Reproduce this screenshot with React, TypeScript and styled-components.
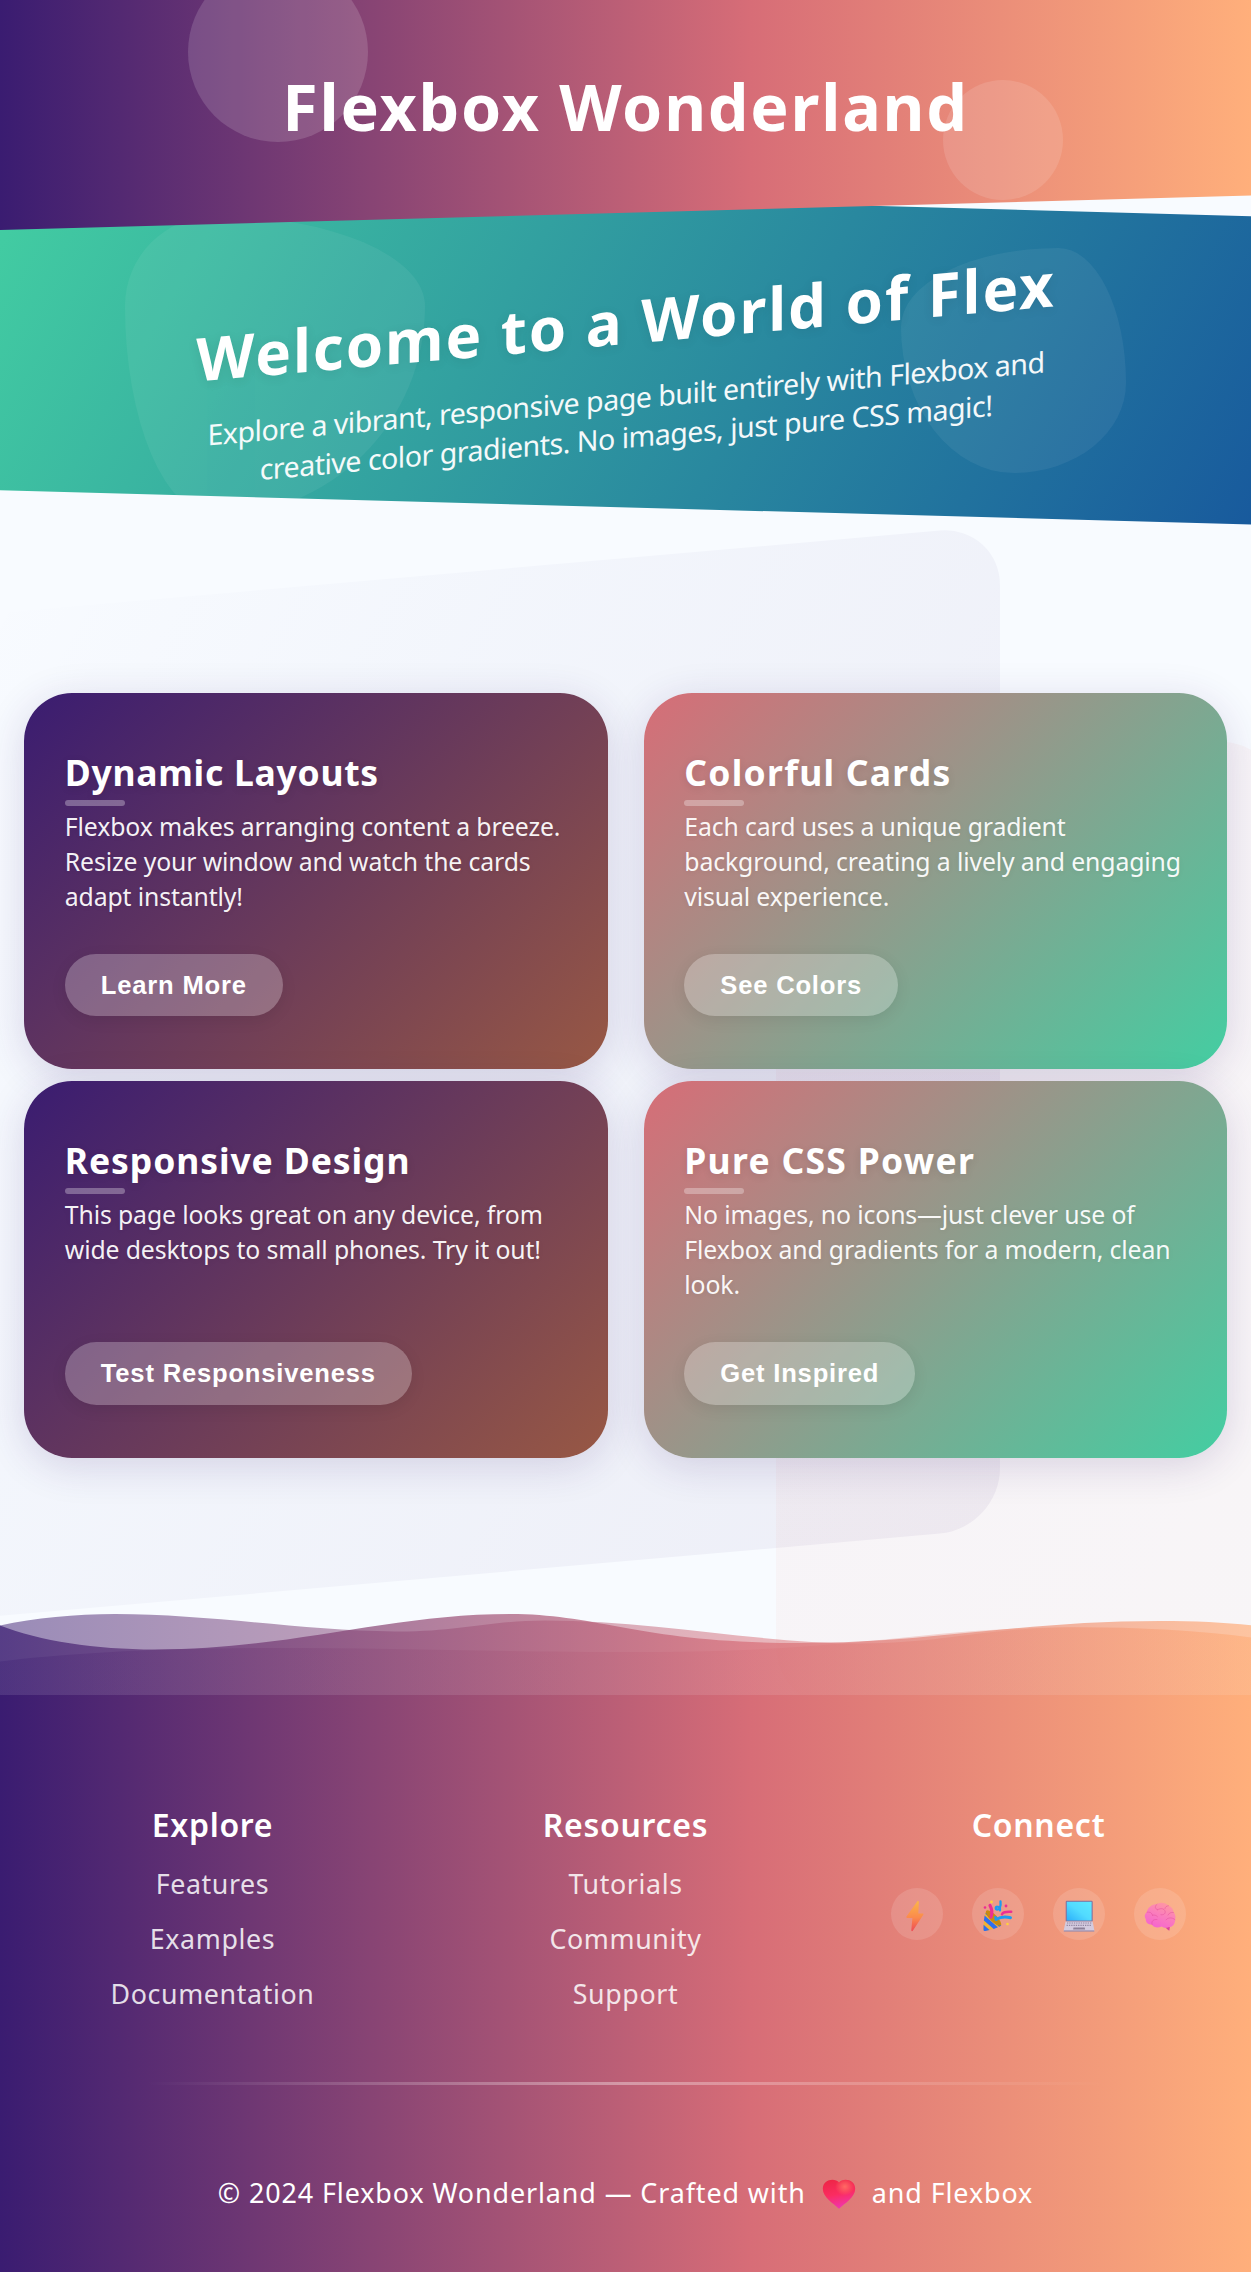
import React from "react";
import styled, { createGlobalStyle } from "styled-components";

const GlobalStyle = createGlobalStyle`
  * { box-sizing: border-box; }
  html, body { margin: 0; padding: 0; }
  body {
    background: #f8fbff;
    color: #fff;
    font-family: "Noto Sans", "Open Sans", "Liberation Sans", sans-serif;
  }
  h1, h2, h3, p, ul { margin: 0; padding: 0; }
`;

const Page = styled.div`
  display: flex;
  flex-direction: column;
  overflow: hidden;
`;

const Header = styled.header`
  position: relative;
  z-index: 2;
  display: flex;
  justify-content: center;
  height: 230px;
  padding-top: 63px;
  background: linear-gradient(90deg, #3a1c71 0%, #d76d77 60%, #ffaf7b 100%);
  clip-path: polygon(0 0, 100% 0, 100% 85%, 0 100%);
`;

const Bubble = styled.span<{ $size: number; $alpha: number; $side: "left" | "right"; $top: number }>`
  position: absolute;
  ${(p) => p.$side}: 15%;
  top: ${(p) => p.$top}px;
  width: ${(p) => p.$size}px;
  height: ${(p) => p.$size}px;
  border-radius: 50%;
  background: rgba(255, 255, 255, ${(p) => p.$alpha});
`;

const SiteTitle = styled.h1`
  position: relative;
  font-size: 64.5px;
  line-height: 87px;
  font-weight: 700;
  letter-spacing: 1.75px;
`;

const Hero = styled.section`
  position: relative;
  z-index: 1;
  display: flex;
  flex-direction: column;
  align-items: center;
  height: 342.5px;
  margin-top: -48px;
  padding-top: 98.5px;
  background: linear-gradient(120deg, #43cea2 0%, #185a9d 100%);
  clip-path: polygon(0 0, 100% 10%, 100% 100%, 0 90%);
`;

const BlobLeft = styled.span`
  position: absolute;
  left: 10%;
  top: 10%;
  width: 300px;
  height: 300px;
  border-radius: 30% 70% 70% 30% / 30% 30% 70% 70%;
  background: rgba(255, 255, 255, 0.06);
`;

const BlobRight = styled.span`
  position: absolute;
  right: 10%;
  bottom: 15%;
  width: 225px;
  height: 225px;
  border-radius: 70% 30% 50% 50% / 35% 60% 40% 65%;
  background: rgba(255, 255, 255, 0.06);
`;

const HeroContent = styled.div`
  position: relative;
  display: flex;
  flex-direction: column;
  align-items: center;
  gap: 16.5px;
  transform: skewY(-5deg);
  text-align: center;
`;

const HeroTitle = styled.h2`
  font-size: 60px;
  line-height: 80px;
  font-weight: 700;
  letter-spacing: 1.95px;
  text-shadow: 0 2px 12px rgba(0, 0, 0, 0.08);
`;

const HeroText = styled.p`
  max-width: 870px;
  font-size: 28.6px;
  line-height: 39px;
  letter-spacing: -0.52px;
  opacity: 0.95;
`;

const Main = styled.main`
  position: relative;
  padding: 168.5px 24px 237.3px;
`;

const Backdrop = styled.span<{ $left: number; $top: number; $width: number; $skew: number; $fill: string }>`
  position: absolute;
  left: ${(p) => p.$left}px;
  top: ${(p) => p.$top}px;
  width: ${(p) => p.$width}px;
  height: 1003px;
  border-radius: 60px;
  transform: skewY(${(p) => p.$skew}deg);
  background: ${(p) => p.$fill};
`;

const CardGrid = styled.div`
  position: relative;
  display: grid;
  grid-template-columns: 1fr 1fr;
  grid-auto-rows: 376.4px;
  gap: 11.9px 36px;
`;

const CardBox = styled.article<{ $from: string; $to: string }>`
  display: flex;
  flex-direction: column;
  align-items: flex-start;
  padding: 54.5px 40.8px 53px;
  border-radius: 48px;
  background: linear-gradient(135deg, ${(p) => p.$from} 0%, ${(p) => p.$to} 100%);
  box-shadow: 0 8px 40px rgba(58, 28, 113, 0.16);
`;

const CardTitle = styled.h3<{ $tracking: number }>`
  font-size: 35.5px;
  line-height: 48px;
  font-weight: 700;
  letter-spacing: ${(p) => p.$tracking}px;
  text-shadow: 0 2px 8px rgba(0, 0, 0, 0.1);
`;

const Underline = styled.span`
  width: 60px;
  height: 6px;
  margin: 4.5px 0 3px;
  border-radius: 3px;
  background: rgba(255, 255, 255, 0.3);
`;

const CardText = styled.p`
  font-size: 24.8px;
  line-height: 35px;
  letter-spacing: -0.13px;
  color: rgba(255, 255, 255, 0.94);
  text-shadow: 0 1px 6px rgba(0, 0, 0, 0.06);
`;

const CardButton = styled.button`
  height: 62.4px;
  margin-top: auto;
  padding: 0 36px;
  border: 0;
  border-radius: 32px;
  background: rgba(255, 255, 255, 0.25);
  box-shadow: 0 4px 16px rgba(0, 0, 0, 0.08);
  color: #fff;
  font-family: "Liberation Sans", Arial, sans-serif;
  font-size: 25.6px;
  font-weight: 700;
  letter-spacing: 0.8px;
`;

const Footer = styled.footer`
  position: relative;
  display: flex;
  flex-direction: column;
  align-items: center;
  height: 577px;
  padding: 108.5px 24px 0;
  background: linear-gradient(90deg, #3a1c71 0%, #d76d77 60%, #ffaf7b 100%);
`;

const WaveArt = styled.svg`
  position: absolute;
  left: 0;
  bottom: 100%;
  width: 100%;
  height: 85px;
`;

const FooterColumns = styled.div`
  display: grid;
  grid-template-columns: repeat(3, 1fr);
  gap: 36px;
  width: 100%;
`;

const FooterColumn = styled.div`
  display: flex;
  flex-direction: column;
  align-items: center;
`;

const FooterTitle = styled.h3`
  font-size: 32px;
  line-height: 44px;
  font-weight: 600;
  letter-spacing: 0.7px;
`;

const LinkList = styled.ul`
  display: flex;
  flex-direction: column;
  align-items: center;
  gap: 18px;
  margin-top: 17.5px;
  list-style: none;
`;

const FooterLink = styled.a`
  display: block;
  color: rgba(255, 255, 255, 0.85);
  font-size: 26.8px;
  line-height: 37px;
  letter-spacing: 0.6px;
`;

const IconRow = styled.div`
  display: flex;
  gap: 29.3px;
  margin-top: 40.5px;
`;

const IconCircle = styled.span`
  display: flex;
  align-items: center;
  justify-content: center;
  width: 52px;
  height: 52px;
  padding-top: 4px;
  border-radius: 50%;
  background: rgba(255, 255, 255, 0.13);
`;

const Divider = styled.span`
  width: 960px;
  height: 3px;
  margin-top: 70px;
  background: linear-gradient(90deg, rgba(255, 255, 255, 0), rgba(255, 255, 255, 0.36), rgba(255, 255, 255, 0));
`;

const Copyright = styled.p`
  display: flex;
  align-items: center;
  margin-top: 89px;
  font-size: 26.9px;
  line-height: 37px;
  letter-spacing: 0.9px;
  white-space: nowrap;
`;

const HeartIcon = styled.svg`
  width: 34px;
  height: 32px;
  margin: 4px 16px 0;
`;

function Waves() {
  return (
    <WaveArt viewBox="0 0 1251 85" preserveAspectRatio="none">
      <defs>
        <linearGradient id="wave" gradientUnits="userSpaceOnUse" x1="0" y1="0" x2="1251" y2="0">
          <stop offset="0" stopColor="#3a1c71" />
          <stop offset="0.6" stopColor="#d76d77" />
          <stop offset="1" stopColor="#ffaf7b" />
        </linearGradient>
      </defs>
      <path
        fill="url(#wave)"
        opacity="0.5"
        d="M0,15.5C35,8 75,4 115,4C210,4 300,20.5 395,21.5C460,22 490,10.5 545,10.5C655,10.5 760,33.5 860,33.5C945,33.5 985,17.3 1075,17.3C1140,17.3 1200,20.5 1251,27.5V85H0Z"
      />
      <path
        fill="url(#wave)"
        opacity="0.7"
        d="M0,15.5C40,31 95,39.5 155,39.5C290,39.5 390,4 510,4C600,4 640,33 800,33C930,33 1020,11 1160,11C1195,11 1225,12.5 1251,15.3V85H0Z"
      />
      <path
        fill="url(#wave)"
        opacity="0.3"
        d="M0,51.5C60,44 150,38 270,38C400,38 500,42 640,42C860,42 920,17.3 1075,17.3C1140,17.3 1200,20.5 1251,27.5V85H0Z"
      />
    </WaveArt>
  );
}

function Bolt() {
  return (
    <svg width="32" height="32" viewBox="0 0 32 32" aria-label="Lightning">
      <defs>
        <linearGradient id="bolt" x1="0.5" y1="0" x2="0.5" y2="1">
          <stop offset="0" stopColor="#fbb548" />
          <stop offset="0.55" stopColor="#fb8a4c" />
          <stop offset="1" stopColor="#ee4a55" />
        </linearGradient>
      </defs>
      <path
        d="M16.2 1.4 5.5 16.6c-.4.7 0 1.3.7 1.3h5.2L10.3 30.3c0 .9 1 1.2 1.5.5l10.5-16c.4-.6.1-1.3-.7-1.3h-4.3l.6-11.600c0-.9-1.100-1.200-1.700-.5Z"
        fill="url(#bolt)"
      />
    </svg>
  );
}

function Party() {
  return (
    <svg width="32" height="32" viewBox="0 0 32 32" aria-label="Party popper">
      <path d="M3.200 12.500c-.9 5-1.700 11-1.800 16.400 0 1.600.6 2.300 2.200 2.100 5-.7 10.800-3 15.800-5.400C20.500 22 8 8.500 3.200 12.500Z" fill="#f2b134" />
      <path d="m2.600 15.500 13.300 11.700-4.200 1.700L1.900 20.400Zm-1 9.300 5.900 5.300-4 .9c-1.300.1-2-.4-2-1.500ZM7 12l11.600 11.500.5 2.300-2 .9L3.200 13.500Z" fill="#2d6ff0" />
      <ellipse cx="11.5" cy="18" rx="3.5" ry="10.3" transform="rotate(-45 11.5 18)" fill="#c98a10" />
      <path d="M9 17c1.500-4 1.200-7.500-1-11.500" fill="none" stroke="#ec2f93" strokeWidth="3.2" strokeLinecap="round" />
      <path d="M14 19.500c4.500-2.800 9-3.200 14.500-1.800" fill="none" stroke="#1e9bf0" strokeWidth="3" strokeLinecap="round" />
      <path d="M18.500 1.500c.5 5-.8 8-3.200 8-2 0-2.100-3 0-2.900 2 0 3 1.700 2.700 3.700" fill="none" stroke="#1e9bf0" strokeWidth="2.3" strokeLinecap="round" />
      <path d="M20 14.300c1-2.800 4.500-2.400 9.200-2.600" fill="none" stroke="#ec2f93" strokeWidth="2.5" strokeLinecap="round" />
      <circle cx="13.5" cy="17.5" r="1.4" fill="#1e9bf0" />
      <circle cx="9.5" cy="2" r="1.4" fill="#ffd23c" />
      <circle cx="25.5" cy="24" r="1.3" fill="#ffd23c" />
      <circle cx="3" cy="7.5" r="1.3" fill="#ec2f93" />
      <circle cx="24" cy="6" r="1.4" fill="#ec2f93" />
    </svg>
  );
}

function Laptop() {
  return (
    <svg width="32" height="32" viewBox="0 0 32 32" aria-label="Laptop">
      <defs>
        <linearGradient id="screen" x1="0" y1="1" x2="1" y2="0">
          <stop offset="0" stopColor="#2bb0fb" />
          <stop offset="0.5" stopColor="#52dbff" />
          <stop offset="1" stopColor="#5ce9ff" />
        </linearGradient>
      </defs>
      <rect x="2.7" y="0.7" width="27" height="21" rx="1.2" fill="#84719c" />
      <rect x="3.8" y="1.8" width="24.800" height="18.700" fill="url(#screen)" />
      <path d="M2.600 21.500h27l1.700 8.500v1.300H.8V30Z" fill="#d4cbdf" />
      <path d="M.8 30.500h30.500v1H.8Z" fill="#8d7d9e" />
      <path d="M4 23h24.300M3.600 25.300h25" stroke="#9286a2" strokeWidth="1.2" strokeDasharray="1.3 1" />
      <path d="M10.500 27.600h11.200l.4 1.900h-12Z" fill="#8d8199" />
    </svg>
  );
}

function Brain() {
  return (
    <svg width="32" height="32" viewBox="0 0 32 32" aria-label="Brain">
      <defs>
        <linearGradient id="brain" x1="0.8" y1="0" x2="0.3" y2="1">
          <stop offset="0" stopColor="#ff9a9e" />
          <stop offset="0.45" stopColor="#fb80ba" />
          <stop offset="1" stopColor="#f564d0" />
        </linearGradient>
      </defs>
      <path d="M20 25.500c1.500 2 3.300 4.300 5.300 5.300l.8-5.300Z" fill="#dc3f9b" />
      <path
        d="M13 4C17 1.700 22 3 24.500 5.700c3.500 1 5 3.900 5 6.600 2 2 2.400 5 1.500 7.500.2 4.500-2.500 7.500-6.500 7.400-2.500 1-5 .7-6.800-.7-4 1.700-8 1-10-2-3.700 0-6-2.300-5.900-5.300-1.900-2.700-1.100-5.500 1-7C3.300 8 7.500 4.300 13 4Z"
        fill="url(#brain)"
      />
      <path
        d="M13 4.200c-2.500 2-2.300 4.700.6 5.600M3 12.200c3-.5 5 .5 5.500 3M8 24.500c-.8-3.500 1.500-5.500 5-5M13.500 9.800c3.500-2 6.500-1.300 7.500 1.200 1 2.400-1.500 4.300-4 3.700M24.500 5.700c-2 .2-3.400 1.200-3.600 3M29.500 12.500c-2.500-.5-4.500.5-5.500 2.500M31 19.600c-3-2.400-7-2.400-9 .3M8.500 15.200c2-.6 3.500 0 5 1.500"
        fill="none"
        stroke="#de4797"
        strokeOpacity="0.42"
        strokeWidth="1"
        strokeLinecap="round"
      />
    </svg>
  );
}

function Heart() {
  return (
    <HeartIcon viewBox="0 0 34 32" aria-label="Heart">
      <defs>
        <linearGradient id="heart" x1="0.3" y1="0" x2="0.55" y2="1">
          <stop offset="0" stopColor="#ee2647" />
          <stop offset="0.5" stopColor="#fb2c60" />
          <stop offset="1" stopColor="#ef36b4" />
        </linearGradient>
        <radialGradient id="heartShine" cx="0.68" cy="0.24" r="0.3">
          <stop offset="0" stopColor="#ff6a63" />
          <stop offset="1" stopColor="#ff6a63" stopOpacity="0" />
        </radialGradient>
      </defs>
      <path d="M17 4.500C13.500-.3 .8 .6 .8 10.800 .8 19.500 11.500 25.500 17 30.800 22.500 25.500 33.200 19.500 33.200 10.800 33.200 .6 20.500-.3 17 4.500Z" fill="url(#heart)" />
      <path d="M17 4.500C13.500-.3 .8 .6 .8 10.800 .8 19.500 11.500 25.500 17 30.800 22.500 25.500 33.200 19.500 33.200 10.800 33.200 .6 20.500-.3 17 4.500Z" fill="url(#heartShine)" />
    </HeartIcon>
  );
}

const purple = { from: "#3a1c71", to: "#985844" };
const green = { from: "#d76d77", to: "#43cea2" };

const cards = [
  {
    title: "Dynamic Layouts",
    tracking: 0.72,
    text: "Flexbox makes arranging content a breeze. Resize your window and watch the cards adapt instantly!",
    action: "Learn More",
    tone: purple,
  },
  {
    title: "Colorful Cards",
    tracking: 1.25,
    text: "Each card uses a unique gradient background, creating a lively and engaging visual experience.",
    action: "See Colors",
    tone: green,
  },
  {
    title: "Responsive Design",
    tracking: 0.9,
    text: "This page looks great on any device, from wide desktops to small phones. Try it out!",
    action: "Test Responsiveness",
    tone: purple,
  },
  {
    title: "Pure CSS Power",
    tracking: 1.28,
    text: "No images, no icons—just clever use of Flexbox and gradients for a modern, clean look.",
    action: "Get Inspired",
    tone: green,
  },
];

const linkColumns = [
  { title: "Explore", links: ["Features", "Examples", "Documentation"] },
  { title: "Resources", links: ["Tutorials", "Community", "Support"] },
];

const socialIcons = [Bolt, Party, Laptop, Brain];

export default function App() {
  return (
    <Page>
      <GlobalStyle />
      <Header>
        <Bubble $size={180} $alpha={0.15} $side="left" $top={-38} />
        <Bubble $size={120} $alpha={0.12} $side="right" $top={79.5} />
        <SiteTitle>Flexbox Wonderland</SiteTitle>
      </Header>

      <Hero>
        <BlobLeft />
        <BlobRight />
        <HeroContent>
          <HeroTitle>Welcome to a World of Flex</HeroTitle>
          <HeroText>
            Explore a vibrant, responsive page built entirely with Flexbox and creative color gradients. No images, just
            pure CSS magic!
          </HeroText>
        </HeroContent>
      </Hero>

      <Main>
        <Backdrop
          $left={-250}
          $top={55}
          $width={1250}
          $skew={-5}
          $fill="linear-gradient(120deg, rgba(58,60,150,0) 12%, rgba(58,60,150,0.028) 42%, rgba(58,28,113,0.057) 100%)"
        />
        <Backdrop
          $left={776}
          $top={200}
          $width={510}
          $skew={5}
          $fill="linear-gradient(120deg, rgba(215,109,119,0.055), rgba(255,150,110,0.055))"
        />
        <CardGrid>
          {cards.map((card) => (
            <CardBox key={card.title} $from={card.tone.from} $to={card.tone.to}>
              <CardTitle $tracking={card.tracking}>{card.title}</CardTitle>
              <Underline />
              <CardText>{card.text}</CardText>
              <CardButton>{card.action}</CardButton>
            </CardBox>
          ))}
        </CardGrid>
      </Main>

      <Footer>
        <Waves />
        <FooterColumns>
          {linkColumns.map((column) => (
            <FooterColumn key={column.title}>
              <FooterTitle>{column.title}</FooterTitle>
              <LinkList>
                {column.links.map((link) => (
                  <li key={link}>
                    <FooterLink>{link}</FooterLink>
                  </li>
                ))}
              </LinkList>
            </FooterColumn>
          ))}
          <FooterColumn>
            <FooterTitle>Connect</FooterTitle>
            <IconRow>
              {socialIcons.map((Icon, i) => (
                <IconCircle key={i}>
                  <Icon />
                </IconCircle>
              ))}
            </IconRow>
          </FooterColumn>
        </FooterColumns>
        <Divider />
        <Copyright>
          <span>© 2024 Flexbox Wonderland — Crafted with</span>
          <Heart />
          <span>and Flexbox</span>
        </Copyright>
      </Footer>
    </Page>
  );
}
